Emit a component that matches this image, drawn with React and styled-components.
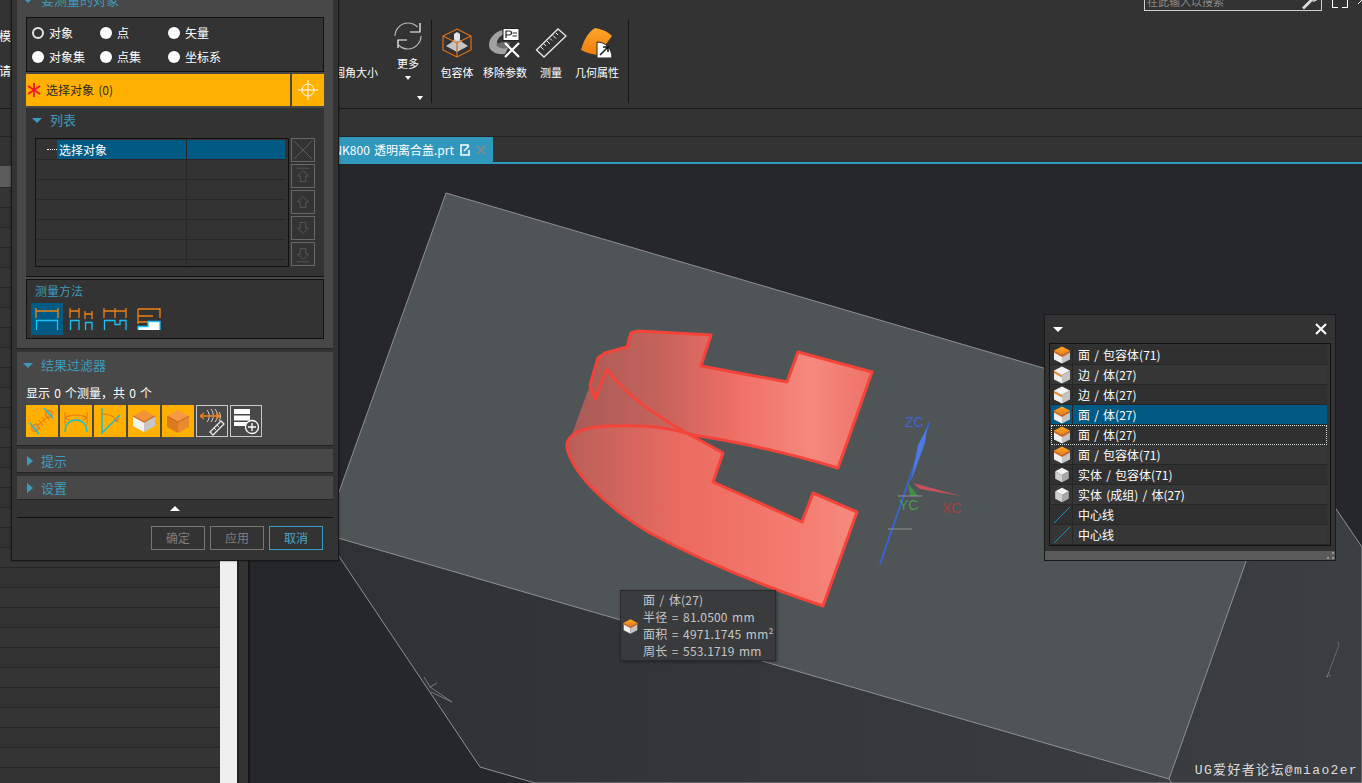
import React from 'react'
import styled, { createGlobalStyle } from 'styled-components'

const TEAL = '#3d9cbd'
const ORANGE = '#ffb000'
const SELECT = '#005a84'
const CJK = '"Noto Sans CJK SC", "Noto Sans", sans-serif'

const Global = createGlobalStyle`
  html, body { margin: 0; padding: 0; background: #333; overflow: hidden; }
  * { box-sizing: border-box; }
`

const Page = styled.div`
  position: relative;
  width: 1362px;
  height: 783px;
  overflow: hidden;
  display: flex;
  flex-direction: column;
  background: #333;
  color: #fff;
  font: 12px/18px ${CJK};
  word-spacing: 1.5px;
`

/* ribbon */
const Ribbon = styled.div`
  flex: none;
  height: 109px;
  display: flex;
  align-items: flex-start;
  border-bottom: 1px solid #1a1a1a;
  font-size: 11px;
`
const EdgeClip = styled.div`
  width: 11px;
  overflow: hidden;
  padding-top: 27px;
  display: flex;
  flex-direction: column;
  align-items: flex-end;
  gap: 17px;
  white-space: nowrap;
  font-size: 12px;
`
const RoundLabel = styled.div`
  width: 367px;
  padding-top: 63px;
  text-align: right;
  white-space: nowrap;
`
const MoreGroup = styled.div`
  width: 38px;
  margin-left: 15px;
  padding-top: 22px;
  display: flex;
  flex-direction: column;
  align-items: flex-start;
`
const MoreInner = styled.div`
  width: 30px;
  display: flex;
  flex-direction: column;
  align-items: center;
  gap: 4px;
  svg { display: block; }
`
const RibbonSep = styled.div`
  width: 1px;
  height: 83px;
  margin-top: 20px;
  margin-left: ${p => p.$ml || 0}px;
  background: #171717;
`
const Tools = styled.div`
  display: flex;
  margin-left: 5px;
`
const Tool = styled.div`
  width: ${p => p.$w}px;
  padding-top: 28px;
  display: flex;
  flex-direction: column;
  align-items: center;
  gap: 5px;
  white-space: nowrap;
  svg { display: block; }
`
const Caret = styled.span`
  display: block;
  width: 0;
  height: 0;
  border-left: ${p => p.$s || 3}px solid transparent;
  border-right: ${p => p.$s || 3}px solid transparent;
  border-top: ${p => (p.$s ? p.$s : 4)}px solid #fff;
`
const CornerCaret = styled(Caret)`
  align-self: flex-end;
  margin-top: 16px;
  margin-right: 8px;
`
const RightCluster = styled.div`
  margin-left: auto;
  width: 218px;
  display: flex;
  align-items: flex-start;
`
const SearchBox = styled.div`
  width: 178px;
  height: 21px;
  margin-top: -10px;
  display: flex;
  align-items: center;
  justify-content: space-between;
  padding: 0 2px 0 2px;
  border: 1px solid #cfcfcf;
  color: #8a8a8a;
  line-height: 16px;
`
const WinCorners = styled.div`
  width: 16px;
  height: 8px;
  margin: 0 10px;
  border-bottom: 1px solid #fff;
  border-left: 1px solid #fff;
  border-right: 1px solid #fff;
  position: relative;
  &::after {
    content: '';
    position: absolute;
    left: 5px;
    right: 5px;
    bottom: -1px;
    height: 1px;
    background: #333;
  }
`
const WinStub = styled.svg`
  display: block;
  flex: none;
`

const SubBar = styled.div`
  flex: none;
  height: 28px;
  border-bottom: 1px solid #242424;
`

/* main area */
const Main = styled.div`
  flex: 1;
  min-height: 0;
  display: grid;
  grid-template-columns: 220px 17px 13px 1fr;
`
const TreePanel = styled.div`
  padding-top: 29px;
  overflow: hidden;
  background: #333;
`
const TreeRow = styled.div`
  height: ${p => (p.$active ? 22 : 20)}px;
  border-bottom: 1px solid #262626;
  background: ${p => (p.$active ? '#5c5c5c' : p.$odd ? '#353535' : '#313131')};
`
const Gutter = styled.div`
  background: #efefef;
`
const Sash = styled.div`
  background: #333;
  border-left: 2px solid #222;
  border-right: 2px solid #161616;
`
const Work = styled.div`
  display: flex;
  flex-direction: column;
  min-width: 0;
`
const TabBar = styled.div`
  flex: none;
  height: 27px;
  border-bottom: 2px solid #3097bd;
`
const Tab = styled.div`
  width: 243px;
  height: 26px;
  display: flex;
  align-items: center;
  justify-content: flex-end;
  gap: 6px;
  padding-right: 7px;
  background: #3097bd;
  white-space: nowrap;
  svg { display: block; }
`
const Viewport = styled.svg`
  flex: 1;
  min-height: 0;
  width: 100%;
  display: block;
  background: #25272a;
`

/* measure dialog */
const Dialog = styled.div`
  position: absolute;
  left: 11px;
  top: -12px;
  width: 328px;
  height: 573px;
  padding: 0 5px;
  background: #333;
  border: 1px solid #181818;
  box-shadow: 0 0 2px rgba(0, 0, 0, .5);
`
const Group = styled.section`
  margin-bottom: 3px;
  padding: 0 9px;
  background: #484848;
  border-bottom: 1px solid #222;
`
const GroupHead = styled.div`
  height: ${p => p.$h}px;
  margin-bottom: ${p => p.$mb || 0}px;
  display: flex;
  align-items: center;
  gap: 7px;
  color: ${TEAL};
  font-size: 13px;
`
const Tri = styled.span`
  display: block;
  width: 0;
  height: 0;
  flex: none;
  ${p => (p.$right
    ? `border-top: 5px solid transparent; border-bottom: 5px solid transparent; border-left: 6px solid ${TEAL}; margin: 0 1px;`
    : `border-left: 5px solid transparent; border-right: 5px solid transparent; border-top: 5px solid ${TEAL}; margin: 0 1px 0 -3px;`)}
`
const ScopeBox = styled.div`
  height: 55px;
  padding: 3px 0 0 5px;
  display: grid;
  grid-template-columns: repeat(3, 68px);
  grid-auto-rows: 24px;
  background: #333;
  border: 1px solid #111;
`
const RadioItem = styled.label`
  display: flex;
  align-items: center;
  gap: 5px;
`
const Radio = styled.span`
  width: 12px;
  height: 12px;
  border-radius: 50%;
  background: ${p => (p.$on ? '#333' : '#fff')};
  border: ${p => (p.$on ? '2px solid #e4e4e4' : 'none')};
`
const SelectRow = styled.div`
  height: 32px;
  margin-top: 2px;
  display: flex;
  gap: 2px;
`
const SelectBar = styled.div`
  flex: 1;
  display: flex;
  align-items: center;
  gap: 5px;
  padding: 0 0 1px 1px;
  background: ${ORANGE};
  color: #2b2b2b;
`
const CrossBtn = styled.div`
  width: 32px;
  display: flex;
  align-items: center;
  justify-content: center;
  background: ${ORANGE};
`
const ListPanel = styled.div`
  height: 169px;
  margin-top: 2px;
  padding: 0 9px;
  background: #333;
  border-bottom: 1px solid #111;
`
const ListHead = styled(GroupHead)`
  margin-bottom: 6px;
`
const ListBody = styled.div`
  display: flex;
  gap: 2px;
`
const ObjTable = styled.div`
  width: 254px;
  height: 129px;
  padding: 1px 3px 0 1px;
  overflow: hidden;
  background: #333;
  border: 1px solid #111;
`
const ObjRow = styled.div`
  height: 20px;
  display: grid;
  grid-template-columns: 20px 130px 1fr;
  border-bottom: 1px solid #272727;
`
const ObjIndent = styled.div`
  &::after {
    content: '';
    display: ${p => (p.$dash ? 'block' : 'none')};
    margin: 9px 0 0 10px;
    height: 1px;
    border-top: 1px dotted #fff;
  }
`
const ObjCell = styled.div`
  padding-left: 2px;
  line-height: 19px;
  background: ${p => (p.$active ? SELECT : 'transparent')};
  border-right: ${p => (p.$last ? 'none' : '1px solid #272727')};
`
const ActionCol = styled.div`
  display: flex;
  flex-direction: column;
  gap: 2px;
`
const ActionBtn = styled.div`
  width: 24px;
  height: 24px;
  border: 1px solid #686868;
  display: flex;
  align-items: center;
  justify-content: center;
  svg { display: block; }
`
const MethodBox = styled.div`
  height: 60px;
  margin: 2px 0 9px;
  padding: 1px 4px;
  background: #333;
  border: 1px solid #111;
`
const MethodTitle = styled.div`
  height: 20px;
  margin: 0 0 2px 4px;
  color: ${TEAL};
  line-height: 20px;
`
const MethodIcons = styled.div`
  display: flex;
  gap: 2px;
`
const MethodBtn = styled.div`
  width: 32px;
  height: 32px;
  background: ${p => (p.$on ? SELECT : 'transparent')};
  svg { display: block; }
`
const CountLine = styled.div`
  height: 24px;
  margin-top: 3px;
  line-height: 24px;
`
const FilterRow = styled.div`
  display: flex;
  gap: 2px;
  padding-bottom: 8px;
`
const FilterBtn = styled.div`
  width: 32px;
  height: 32px;
  background: ${p => (p.$plain ? 'transparent' : ORANGE)};
  border: ${p => (p.$plain ? '1px solid #c8c8c8' : 'none')};
  display: flex;
  align-items: center;
  justify-content: center;
  svg { display: block; flex: none; }
`
const CollapseRow = styled.div`
  height: 14px;
  margin-top: -3px;
  padding-top: 3px;
  display: flex;
  align-items: center;
  justify-content: center;
`
const UpTri = styled.span`
  display: block;
  width: 0;
  height: 0;
  border-left: 5px solid transparent;
  border-right: 5px solid transparent;
  border-bottom: 5px solid #fff;
`
const DialogFoot = styled.div`
  margin-top: 3px;
  padding: 8px 10px 0 0;
  display: flex;
  justify-content: flex-end;
  gap: 5px;
  border-top: 1px solid #0f0f0f;
`
const FootBtn = styled.div`
  width: 54px;
  height: 24px;
  line-height: 22px;
  text-align: center;
  border: 1px solid ${p => (p.$primary ? '#3a9fc4' : '#767676')};
  color: ${p => (p.$primary ? '#48a9cc' : '#7d7d7d')};
`

/* selection list popup */
const Popup = styled.div`
  position: absolute;
  left: 1044px;
  top: 314px;
  width: 292px;
  height: 247px;
  background: #333;
  border: 1px solid #1a1a1a;
  display: flex;
  flex-direction: column;
`
const PopupHead = styled.div`
  height: 29px;
  padding: 0 8px;
  display: flex;
  align-items: center;
  justify-content: space-between;
  svg { display: block; }
`
const PopupList = styled.div`
  height: 203px;
  margin: 0 4px;
  padding: 1px;
  border: 1px solid #111;
`
const PopupRow = styled.div`
  width: 276px;
  height: 20px;
  display: grid;
  grid-template-columns: 22px 1fr;
  background: ${p => (p.$active ? SELECT : p.$odd ? '#363636' : '#303030')};
  border-bottom: 1px solid #262626;
  outline: ${p => (p.$focus ? '1px dotted #d8e4e4' : 'none')};
  outline-offset: -1px;
`
const PopupIcon = styled.div`
  display: flex;
  align-items: center;
  justify-content: center;
  border-right: 1px solid #272727;
  svg { display: block; }
`
const PopupText = styled.div`
  padding-left: 5px;
  line-height: 19px;
`
const PopupFoot = styled.div`
  height: 9px;
  margin-top: 5px;
  background: #5a5a5a;
  display: flex;
  justify-content: flex-end;
  align-items: flex-end;
  padding: 0 1px 1px 0;
  svg { display: block; }
`

/* hover tooltip */
const Tip = styled.div`
  position: absolute;
  left: 620px;
  top: 590px;
  width: 156px;
  height: 71px;
  padding: 0 0 0 22px;
  background: rgba(58, 59, 60, .97);
  border: 1px solid #2a2a2a;
  box-shadow: 1px 1px 3px rgba(0, 0, 0, .4);
  color: #c6c6c6;
  line-height: 17px;
  letter-spacing: .2px;
  white-space: nowrap;
`
const TipIcon = styled.div`
  position: absolute;
  left: 1px;
  top: 27px;
  svg { display: block; }
`
const Watermark = styled.div`
  position: absolute;
  right: 4px;
  bottom: 4px;
  color: #dcdcdc;
  font: 13px/16px "Liberation Mono", "Noto Sans CJK SC", monospace;
  letter-spacing: 1.35px;
  word-spacing: 0;
`

/* drawings */
function Cube({ kind = 'face', size = 20 }) {
  const top = kind === 'face' ? 'url(#cubeTop)' : '#f2f2f2'
  const small = kind === 'solid'
  return (
    <svg width={size} height={size} viewBox="0 0 20 20">
      <g transform={small ? 'translate(1.5 1.5) scale(.85)' : undefined}>
        <path d="M10 1.5 18 5.5 10 10 2 5.5Z" fill={top} />
        <path d="M2 5.5 10 10V18.5L2 14.5Z" fill={small ? '#d0d0d0' : '#f0f0f0'} />
        <path d="M18 5.5 10 10V18.5L18 14.5Z" fill={small ? '#a8a8a8' : '#c4c4c4'} />
        {kind === 'face' && <path d="M2 5.5 10 10 18 5.5V7.5L10 12 2 7.5Z" fill="#c9641a" />}
        {kind === 'edge' && <path d="M2 7 10 11.5" stroke="#ee7f12" strokeWidth="1.6" />}
      </g>
    </svg>
  )
}

function BlueLine() {
  return (
    <svg width="20" height="20" viewBox="0 0 20 20">
      <path d="M2 18 18 2" stroke="#1199bb" strokeWidth="1" />
    </svg>
  )
}

function ArrowBtn({ up, bar }) {
  const head = up ? 'M6 12 12 6 18 12H15V18H9V12Z' : 'M6 12 12 18 18 12H15V6H9V12Z'
  return (
    <svg width="22" height="22" viewBox="0 0 24 24" fill="none" stroke="#595959">
      <path d={head} />
      {bar && <path d={up ? 'M5 3.5H19' : 'M5 20.5H19'} />}
    </svg>
  )
}

function MethodSvg({ orange, blue, fill }) {
  return (
    <svg width="32" height="32" viewBox="0 0 32 32" fill="none" strokeWidth="1.3">
      {fill && <path d={fill} fill="#fff" />}
      <path d={orange} stroke="#f08214" />
      <path d={blue} stroke="#19c3f5" />
    </svg>
  )
}

const EDGE = '#19bcd8'
const DIM = '#e8761a'

function OrangeCube() {
  return (
    <svg width="32" height="32" viewBox="0 0 32 32">
      <path d="M16 5 27 11 16 17 5 11Z" fill="#f79a45" />
      <path d="M5 11 16 17V28L5 22Z" fill="#dd7a20" />
      <path d="M27 11 16 17V28L27 22Z" fill="#e98a2e" />
      <path d="M5 11 16 17 27 11" fill="none" stroke="#c9641a" />
    </svg>
  )
}

function WhiteCube() {
  return (
    <svg width="32" height="32" viewBox="0 0 32 32">
      <path d="M16 5 27 11 16 17 5 11Z" fill="#f3943c" />
      <path d="M5 11 16 17V27L5 21Z" fill="#f4f4f4" />
      <path d="M27 11 16 17V27L27 21Z" fill="#c6c6c6" />
      <path d="M5 11 16 17 27 11" fill="none" stroke="#cf6a1a" strokeWidth="1.2" />
    </svg>
  )
}

export default function App() {
  const popupRows = [
    ['face', '面 / 包容体(71)'],
    ['edge', '边 / 体(27)'],
    ['edge', '边 / 体(27)'],
    ['face', '面 / 体(27)', 'active'],
    ['face', '面 / 体(27)', 'focus'],
    ['face', '面 / 包容体(71)'],
    ['solid', '实体 / 包容体(71)'],
    ['solid', '实体 (成组) / 体(27)'],
    ['line', '中心线'],
    ['line', '中心线'],
  ]
  const treeRows = Array.from({ length: 31 }, (_, i) => i)

  return (
    <Page>
      <Global />
      <svg width="0" height="0" style={{ position: 'absolute' }}>
        <defs>
          <linearGradient id="cubeTop" x1="0" y1="0" x2="0" y2="1">
            <stop offset="0" stopColor="#ffa62a" />
            <stop offset="1" stopColor="#ee7d10" />
          </linearGradient>
        </defs>
      </svg>

      <Ribbon>
        <EdgeClip>
          <span>模</span>
          <span>请</span>
        </EdgeClip>
        <RoundLabel>倒圆角大小</RoundLabel>
        <MoreGroup>
          <MoreInner>
            <svg width="30" height="28" viewBox="0 0 30 28" fill="none" strokeWidth="1.2">
              <path d="M2 14C2 7 8 1 15 1C19 1 22 2.500 24.500 5" stroke="#b8b8b8" />
              <path d="M28 14C28 21 22 27 15 27C11 27 8 25.500 5.500 23" stroke="#b8b8b8" />
              <path d="M27 1V10H17" stroke="#fff" />
              <path d="M5 26V18H14" stroke="#fff" />
            </svg>
            <span>更多</span>
            <Caret />
          </MoreInner>
          <CornerCaret />
        </MoreGroup>
        <RibbonSep />
        <Tools>
          <Tool $w={40}>
            <svg width="32" height="30" viewBox="0 0 32 30" fill="none">
              <path d="M11 14 16 8 21 14 27 18 16 24 5 18Z" fill="#c4c4c4" />
              <path d="M13 6 16 4 19 6V11L16 13 13 11Z" fill="#e6e6e6" />
              <path d="M16 13V24" stroke="#8a8a8a" />
              <path d="M16 1 30 8V22L16 29 2 22V8ZM2 8 16 15 30 8M16 15V29" stroke="#e8761a" strokeWidth="1.1" />
            </svg>
            <span>包容体</span>
          </Tool>
          <Tool $w={56}>
            <svg width="34" height="30" viewBox="0 0 34 30" fill="none">
              <path d="M1 17C1 10 7 4 14 2L16 6C12 8 9 11 9 15C11 19 16 20 20 20L17 26C8 27 1 23 1 17Z" fill="#a2a2a2" />
              <path d="M8 17C11 14 17 13 22 15L20 20C15 21 10 20 8 17Z" fill="#6d6d6d" />
              <rect x="15" y="0.500" width="16" height="12" fill="#fff" stroke="#222" />
              <path d="M18 10V3H21.500A2 2 0 0 1 21.500 7H18M24.500 5H29M24.500 8H29" stroke="#222" strokeWidth="1.2" />
              <path d="M17 15 31 29M31 15 17 29" stroke="#fff" strokeWidth="2.200" />
            </svg>
            <span>移除参数</span>
          </Tool>
          <Tool $w={36}>
            <svg width="32" height="30" viewBox="0 0 32 30" fill="none" stroke="#e8e8e8">
              <path d="M1.500 22 23 1 31 8 9 29Z" strokeWidth="1.300" />
              <path d="M6 19 8.500 21.500M9 16 11 18M12 13 15 16M15 10.500 17 12.500M18 7.500 21 10.500M21 5 23 7" />
            </svg>
            <span>测量</span>
          </Tool>
          <Tool $w={56}>
            <svg width="32" height="30" viewBox="0 0 32 30" fill="none">
              <path d="M14 0C20 1 26 3 31 8L25 16 16 27C9 26 4 24 0 22C2 14 7 4 14 0Z" fill="url(#cubeTop)" />
              <path d="M16 14C24 14 31 20 31 30H16Z" fill="#fff" stroke="#222" />
              <path d="M19 27 27 19M22 19H27V24" stroke="#111" strokeWidth="1.500" />
            </svg>
            <span>几何属性</span>
          </Tool>
        </Tools>
        <RibbonSep $ml={3} />
        <RightCluster>
          <SearchBox>
            <span>在此输入以搜索</span>
            <svg width="18" height="18" viewBox="0 0 18 18" fill="none" stroke="#e4e4e4" strokeWidth="1.300">
              <circle cx="12.500" cy="5" r="4" />
              <path d="M9.500 8 2 15.500 3 16.500 10.500 9" />
            </svg>
          </SearchBox>
          <WinCorners />
          <WinStub width="4" height="4" viewBox="0 0 4 4" stroke="#fff"><path d="M0 4 4 0" /></WinStub>
        </RightCluster>
      </Ribbon>

      <SubBar />

      <Main>
        <TreePanel>
          {treeRows.map(i => <TreeRow key={i} $active={i === 0} $odd={i % 2 === 1} />)}
        </TreePanel>
        <Gutter />
        <Sash />
        <Work>
          <TabBar>
            <Tab>
              <span>NK800 透明离合盖.prt</span>
              <svg width="10" height="12" viewBox="0 0 10 12" fill="none" stroke="#fff" strokeWidth="1.500">
                <path d="M8 3V1H1V11H9V6" />
                <path d="M4 7 9 2" />
              </svg>
              <svg width="10" height="10" viewBox="0 0 10 10" stroke="#7b8b93" strokeWidth="1.800">
                <path d="M1 1 9 9M9 1 1 9" />
              </svg>
            </Tab>
          </TabBar>
          <Viewport viewBox="250 164 1112 619" preserveAspectRatio="none">
            <defs>
              <linearGradient id="bodyFill" x1="250" y1="0" x2="1362" y2="0" gradientUnits="userSpaceOnUse">
                <stop offset="0" stopColor="#2e3134" />
                <stop offset="1" stopColor="#3c3f42" />
              </linearGradient>
              <linearGradient id="backFill" x1="567" y1="0" x2="872" y2="0" gradientUnits="userSpaceOnUse">
                <stop offset="0" stopColor="#a75b56" />
                <stop offset=".3" stopColor="#c4625b" />
                <stop offset=".55" stopColor="#ef6f66" />
                <stop offset=".8" stopColor="#f4897e" />
                <stop offset="1" stopColor="#ef7268" />
              </linearGradient>
              <linearGradient id="frontFill" x1="567" y1="0" x2="857" y2="0" gradientUnits="userSpaceOnUse">
                <stop offset="0" stopColor="#b85f59" />
                <stop offset=".4" stopColor="#ec6b61" />
                <stop offset=".8" stopColor="#f47c70" />
                <stop offset="1" stopColor="#f48a7e" />
              </linearGradient>
            </defs>

            <path d="M324 534 480 767 535 783H1362V547L1289 440Z" fill="url(#bodyFill)" stroke="#8e9193" />
            <path d="M446 193 1289 440 1169 779 324 534Z" fill="#4f5457" stroke="#8e9193" />
            <path d="M1169 779 1172 783" stroke="#8e9193" />
            <path d="M424 677 430 687 452 702 431 692 M430 687 437 683" fill="none" stroke="#777a7c" />
            <path d="M1338 642 1339 645 1327 677M1327 677 1329 673M1327 677 1331 675" fill="none" stroke="#8e9193" strokeDasharray="1 1" />

            <path
              d="M567 448 590 385 598 358 605 353 627 347 631 333 638 331 711 335 701 366 787 382 798 352 872 372 838 468Q760 445 693 435 650 425 617 426 565 426 567 448Z"
              fill="url(#backFill)"
            />
            <path
              d="M567 448C565 432 590 425 617 426 650 425 670 428 685 432L723 453 713 482 802 522 813 493 857 512 823 606C760 585 700 560 650 533 600 503 572 470 567 448Z"
              fill="url(#frontFill)"
            />
            <g fill="none" stroke="#f4443a" strokeWidth="3" strokeLinejoin="round">
              <path d="M607 369 595 399 590 385 598 358 605 353 627 347 631 333 638 331 711 335 701 366 787 382 798 352 872 372 838 468Q760 445 693 435" />
              <path d="M567 448C565 432 590 425 617 426 650 425 670 428 693 435" />
              <path d="M607 369C625 395 655 415 685 432L723 453 713 482 802 522 813 493 857 512 823 606C760 585 700 560 650 533 600 503 572 470 567 448" />
            </g>

            <path d="M929 423 880 564" stroke="#3b63cf" strokeWidth="2" />
            <path d="M927 428 925 443 911 481 918 445Z" fill="#4d78e6" />
            <path d="M913 483 961 496 920 489Z" fill="#c9525a" />
            <path d="M908 483 918 496 910 496Z" fill="#3f8f45" />
            <path d="M898 496H922M888 529H912" stroke="#8e9193" />
            <text x="905" y="427" fill="#3f66d8" fontSize="14" fontFamily="Liberation Sans">ZC</text>
            <text x="899" y="510" fill="#4d9a52" fontSize="14" fontFamily="Liberation Sans">YC</text>
            <text x="942" y="513" fill="#a8403f" fontSize="14" fontFamily="Liberation Sans">XC</text>
          </Viewport>
        </Work>
      </Main>

      <Dialog>
        <Group>
          <GroupHead $h={22} $mb={6}>
            <Tri />
            <span>要测量的对象</span>
          </GroupHead>
          <ScopeBox>
            {['对象', '点', '矢量', '对象集', '点集', '坐标系'].map((label, i) => (
              <RadioItem key={label}>
                <Radio $on={i === 0} />
                <span>{label}</span>
              </RadioItem>
            ))}
          </ScopeBox>
          <SelectRow>
            <SelectBar>
              <svg width="14" height="14" viewBox="0 0 14 14" stroke="#f5142e" strokeWidth="1.800">
                <path d="M7 0V14M1 3 13 11M13 3 1 11" />
              </svg>
              <span>选择对象 (0)</span>
            </SelectBar>
            <CrossBtn>
              <svg width="20" height="20" viewBox="0 0 20 20" fill="none" stroke="#fff">
                <circle cx="10" cy="10" r="6" />
                <path d="M10 0V20M0 10H20" />
              </svg>
            </CrossBtn>
          </SelectRow>
          <ListPanel>
            <ListHead $h={24}>
              <Tri />
              <span>列表</span>
            </ListHead>
            <ListBody>
              <ObjTable>
                <ObjRow>
                  <ObjIndent $dash />
                  <ObjCell $active>选择对象</ObjCell>
                  <ObjCell $active $last />
                </ObjRow>
                {[0, 1, 2, 3, 4, 5].map(i => (
                  <ObjRow key={i}>
                    <ObjIndent />
                    <ObjCell />
                    <ObjCell $last />
                  </ObjRow>
                ))}
              </ObjTable>
              <ActionCol>
                <ActionBtn>
                  <svg width="22" height="22" viewBox="0 0 22 22" stroke="#5c5c5c"><path d="M2 2 20 20M20 2 2 20" /></svg>
                </ActionBtn>
                <ActionBtn><ArrowBtn up bar /></ActionBtn>
                <ActionBtn><ArrowBtn up /></ActionBtn>
                <ActionBtn><ArrowBtn /></ActionBtn>
                <ActionBtn><ArrowBtn bar /></ActionBtn>
              </ActionCol>
            </ListBody>
          </ListPanel>
          <MethodBox>
            <MethodTitle>测量方法</MethodTitle>
            <MethodIcons>
              <MethodBtn $on>
                <MethodSvg orange="M5 5V15M27 5V15M5 8H27" blue="M5.500 27V17.500H26.500V27" />
              </MethodBtn>
              <MethodBtn>
                <MethodSvg orange="M5 5V15M14 5V15M5 8H14M20 8V16M27 8V16M20 11H27" blue="M5.500 27V17.500H14V27M20.500 27V19.500H27V27" />
              </MethodBtn>
              <MethodBtn>
                <MethodSvg orange="M5 5V15M16 5V15M27 5V15M5 8H27" blue="M5.500 27V17.500H16V21.500H21V17.500H27V27" />
              </MethodBtn>
              <MethodBtn>
                <MethodSvg
                  orange="M5 6V21M27 5V15M5 6H27M5 13H20M5 19H15"
                  blue="M5 27V23.500H15V18.500H27V27"
                  fill="M5 27V24H15V19H27V27Z"
                />
              </MethodBtn>
            </MethodIcons>
          </MethodBox>
        </Group>

        <Group>
          <GroupHead $h={26}>
            <Tri />
            <span>结果过滤器</span>
          </GroupHead>
          <CountLine>显示 0 个测量，共 0 个</CountLine>
          <FilterRow>
            <FilterBtn>
              <svg width="32" height="32" viewBox="0 0 32 32" fill="none">
                <path d="M10 22 23 10M13 15 17 21M16 12 20 18M19 9 23 15M10 18 14 24" stroke={DIM} />
                <circle cx="9" cy="23" r="3.500" fill="#e8a33a" stroke={DIM} />
                <circle cx="23" cy="9" r="3.500" fill="#e8a33a" stroke={DIM} />
                <path d="M4 18 13 29M18 3 27 13" stroke={EDGE} strokeWidth="1.300" />
              </svg>
            </FilterBtn>
            <FilterBtn>
              <svg width="32" height="32" viewBox="0 0 32 32" fill="none">
                <path d="M5 27C5 19 10 15 16 15C22 15 27 19 27 27" stroke={EDGE} strokeWidth="1.400" />
                <path d="M5 7V20M27 7V20" stroke={DIM} />
                <path d="M5 13C12 9 20 9 27 13M5 13 9 10M5 13 9 15M27 13 23 10M27 13 23 15" stroke={DIM} />
              </svg>
            </FilterBtn>
            <FilterBtn>
              <svg width="32" height="32" viewBox="0 0 32 32" fill="none">
                <path d="M8 3V28L26 10" stroke={EDGE} strokeWidth="1.500" />
                <path d="M8 9C15 9 21 11 23 17M23 17 20 14M23 17 25 13" stroke={DIM} />
              </svg>
            </FilterBtn>
            <FilterBtn><WhiteCube /></FilterBtn>
            <FilterBtn><OrangeCube /></FilterBtn>
            <FilterBtn $plain>
              <svg width="30" height="30" viewBox="0 0 30 30" fill="none">
                <path d="M14 3C17 7 17 12 14 16M18 3C21 7 21 12 18 16M10 4C13 8 13 12 10 16M22 6C24 9 24 11 22 15" stroke="#d0d0d0" />
                <path d="M3 10H23M3 10 7 7M3 10 7 13M23 10 19 7M23 10 19 13" stroke="#f08214" strokeWidth="1.300" />
                <path d="M13 26 24 15 27 18 16 29Z" stroke="#e8e8e8" strokeWidth="1.300" />
                <path d="M17 22 19 24M20 19 22 21" stroke="#e8e8e8" />
              </svg>
            </FilterBtn>
            <FilterBtn $plain>
              <svg width="30" height="30" viewBox="0 0 30 30" fill="none">
                <path d="M3 3H19V8H3ZM3 9.500H19V14.500H3ZM3 16H19V20H3Z" fill="#fff" />
                <circle cx="21" cy="21" r="6.500" fill="#484848" stroke="#fff" strokeWidth="1.300" />
                <path d="M21 17V25M17 21H25" stroke="#fff" strokeWidth="1.300" />
              </svg>
            </FilterBtn>
          </FilterRow>
        </Group>

        <Group>
          <GroupHead $h={23}>
            <Tri $right />
            <span>提示</span>
          </GroupHead>
        </Group>
        <Group>
          <GroupHead $h={23}>
            <Tri $right />
            <span>设置</span>
          </GroupHead>
        </Group>

        <CollapseRow><UpTri /></CollapseRow>
        <DialogFoot>
          <FootBtn>确定</FootBtn>
          <FootBtn>应用</FootBtn>
          <FootBtn $primary>取消</FootBtn>
        </DialogFoot>
      </Dialog>

      <Popup>
        <PopupHead>
          <Caret $s={5} />
          <svg width="12" height="12" viewBox="0 0 12 12" stroke="#fff" strokeWidth="2">
            <path d="M1 1 11 11M11 1 1 11" />
          </svg>
        </PopupHead>
        <PopupList>
          {popupRows.map(([kind, label, state], i) => (
            <PopupRow key={i} $odd={i % 2 === 1} $active={state === 'active'} $focus={state === 'focus'}>
              <PopupIcon>
                {kind === 'line' ? <BlueLine /> : <Cube kind={kind} />}
              </PopupIcon>
              <PopupText>{label}</PopupText>
            </PopupRow>
          ))}
        </PopupList>
        <PopupFoot>
          <svg width="7" height="7" viewBox="0 0 7 7" fill="#9a9a9a">
            <path d="M5 0H7V2H5ZM0 5H2V7H0ZM5 5H7V7H5Z" />
          </svg>
        </PopupFoot>
      </Popup>

      <Tip>
        <TipIcon><Cube kind="face" size={17} /></TipIcon>
        <div>面 / 体(27)</div>
        <div>半径 = 81.0500 mm</div>
        <div>面积 = 4971.1745 mm²</div>
        <div>周长 = 553.1719 mm</div>
      </Tip>

      <Watermark>UG爱好者论坛@miao2er</Watermark>
    </Page>
  )
}
